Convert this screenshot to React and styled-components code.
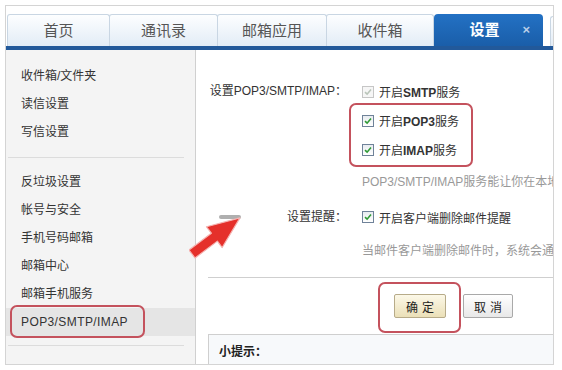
import React from 'react';
import styled, { createGlobalStyle } from 'styled-components';

const GlobalStyle = createGlobalStyle`
  html, body {
    margin: 0;
    padding: 0;
    background: #fff;
  }
  body {
    font-family: "Liberation Sans", "Noto Sans CJK SC", sans-serif;
    font-size: 12px;
    color: #333;
  }
`;

const tabs = [
  { label: '首页', width: 103 },
  { label: '通讯录', width: 109 },
  { label: '邮箱应用', width: 110 },
  { label: '收件箱', width: 108 },
];

const navTop = ['收件箱/文件夹', '读信设置', '写信设置'];
const navBottom = ['反垃圾设置', '帐号与安全', '手机号码邮箱', '邮箱中心', '邮箱手机服务'];

const Frame = styled.div`
  margin: 5px 0 0 5px;
  width: 549px;
  height: 360px;
  box-sizing: border-box;
  border: 1px solid #d4d4d4;
  overflow: hidden;
  display: flex;
  flex-direction: column;
`;

const TabBar = styled.div`
  display: flex;
  align-items: flex-end;
  height: 40px;
  padding-left: 1px;
  border-bottom: 4px solid #22599a;
  overflow: hidden;
`;

const Tab = styled.div`
  flex-shrink: 0;
  width: ${({ $w }) => $w}px;
  height: 32px;
  box-sizing: border-box;
  margin-left: -1px;
  border: 1px solid #c9d6e3;
  border-bottom: none;
  border-radius: 3px 3px 0 0;
  background: linear-gradient(#fdfeff, #e2ecf6);
  color: #555;
  font-size: 15px;
  line-height: 31px;
  text-align: center;
  &:first-child {
    margin-left: 0;
  }
`;

const ActiveTab = styled.div`
  position: relative;
  flex-shrink: 0;
  width: 109px;
  height: 32px;
  border-radius: 4px 4px 0 0;
  background: linear-gradient(#2371c4, #1a5ea9);
  color: #fff;
  font-size: 15px;
  font-weight: bold;
  line-height: 31px;
  text-align: center;
  padding-right: 8px;
  box-sizing: border-box;
`;

const Close = styled.span`
  position: absolute;
  right: 13px;
  top: 0;
  font-size: 13px;
  color: #b9cfe9;
`;

const PartialTab = styled.div`
  flex-shrink: 0;
  width: 20px;
  height: 29px;
  margin-left: 7px;
  border-top: 1px solid #c9d6e3;
  border-left: 1px solid #c9d6e3;
  border-radius: 3px 0 0 0;
  background: linear-gradient(#fdfeff, #e2ecf6);
`;

const Body = styled.div`
  position: relative;
  flex: 1;
  display: flex;
  min-height: 0;
`;

const Sidebar = styled.div`
  width: 189px;
  flex-shrink: 0;
  border-right: 1px solid #d0d0d0;
  background: #f4f4f4;
  padding-top: 12px;
`;

const NavItem = styled.div`
  position: relative;
  height: 28px;
  line-height: 28px;
  padding-left: 15px;
  font-size: 12px;
  color: #333;
  background: ${({ $active }) => ($active ? '#e5e5e5' : 'transparent')};
  letter-spacing: ${({ $latin }) => ($latin ? '0.4px' : '0')};
`;

const NavDivider = styled.div`
  height: 1px;
  background: #dcdcdc;
  margin: ${({ $m }) => $m};
  margin-left: 2px;
  margin-right: 11px;
`;

const Mark = styled.span`
  position: absolute;
  left: ${({ $l }) => $l}px;
  top: ${({ $t }) => $t}px;
  width: ${({ $w }) => $w}px;
  height: ${({ $h }) => $h}px;
  box-sizing: border-box;
  border: 2px solid #c4525d;
  border-radius: 7px;
  pointer-events: none;
`;

const Main = styled.div`
  position: relative;
  flex: 1;
  min-width: 0;
  overflow: hidden;
  background: #fff;
  padding: 27px 0 0 12px;
  white-space: nowrap;
`;

const FieldRow = styled.div`
  display: grid;
  grid-template-columns: 139px auto;
  column-gap: 15px;
  margin-top: ${({ $mt }) => $mt || 0}px;
`;

const Label = styled.div`
  text-align: right;
  line-height: ${({ $lh }) => $lh}px;
  color: #333;
`;

const Options = styled.div`
  display: flex;
  flex-direction: column;
`;

const Group = styled.div`
  position: relative;
`;

const Option = styled.div`
  display: flex;
  align-items: center;
  gap: 5px;
  height: ${({ $h }) => $h}px;
  color: #333;
  b {
    font-weight: bold;
  }
`;

const Box = styled.span`
  width: 12px;
  height: 12px;
  box-sizing: border-box;
  border: 1px solid ${({ $off }) => ($off ? '#c6c6c6' : '#6f8299')};
  background: ${({ $off }) => ($off ? '#f6f6f6' : 'linear-gradient(#e8ecf0, #fff)')};
  display: inline-flex;
  align-items: center;
  justify-content: center;
`;

const Hint = styled.div`
  color: #999;
  line-height: 18px;
  margin-top: ${({ $mt }) => $mt}px;
`;

const Divider = styled.div`
  height: 1px;
  background: #cfcfcf;
  margin-top: 17px;
`;

const ButtonRow = styled.div`
  display: flex;
  gap: 17px;
  margin-top: 16px;
  padding-left: 186px;
`;

const Button = styled.button`
  height: 24px;
  width: ${({ $w }) => $w}px;
  padding: 0;
  border-radius: 2px;
  font-family: "Liberation Sans", "Noto Sans CJK SC", sans-serif;
  font-size: 12px;
  color: #222;
  letter-spacing: 4px;
  text-indent: 4px;
  border: 1px solid ${({ $primary }) => ($primary ? '#b7ab89' : '#a9a9a9')};
  background: ${({ $primary }) =>
    $primary ? 'linear-gradient(#fcf8e8, #ebe0b8)' : 'linear-gradient(#fff, #e8e8e8)'};
`;

const Tips = styled.div`
  margin-top: 16px;
  height: 40px;
  border-top: 1px solid #cfcfcf;
  border-left: 1px solid #cfcfcf;
  background: #f7f9fb;
  padding: 8px 0 0 10px;
  line-height: 18px;
  font-weight: bold;
  color: #222;
`;

const Arrow = styled.svg`
  position: absolute;
  left: 183px;
  top: 160px;
  pointer-events: none;
`;

const Check = ({ off }) => (
  <Box $off={off}>
    <svg width="8" height="8" viewBox="0 0 8 8">
      <path
        d="M1 4.2 L3.1 6.2 L7 1.6"
        fill="none"
        stroke={off ? '#b9c4b9' : '#2f9a35'}
        strokeWidth="1.6"
      />
    </svg>
  </Box>
);

const App = () => (
  <>
    <GlobalStyle />
    <Frame>
      <TabBar>
        {tabs.map((t) => (
          <Tab key={t.label} $w={t.width}>
            {t.label}
          </Tab>
        ))}
        <ActiveTab>
          设置
          <Close>×</Close>
        </ActiveTab>
        <PartialTab />
      </TabBar>
      <Body>
        <Sidebar>
          {navTop.map((n) => (
            <NavItem key={n}>{n}</NavItem>
          ))}
          <NavDivider $m="11px 0 10px" />
          {navBottom.map((n) => (
            <NavItem key={n}>{n}</NavItem>
          ))}
          <NavItem $active $latin>
            POP3/SMTP/IMAP
            <Mark $l={4} $t={-3} $w={135} $h={33} />
          </NavItem>
          <NavDivider $m="9px 0 0" />
        </Sidebar>
        <Main>
          <FieldRow>
            <Label $lh={29}>设置POP3/SMTP/IMAP：</Label>
            <Options>
              <Option $h={29}>
                <Check off />
                <span>
                  开启<b>SMTP</b>服务
                </span>
              </Option>
              <Group>
                <Option $h={29}>
                  <Check />
                  <span>
                    开启<b>POP3</b>服务
                  </span>
                </Option>
                <Option $h={29}>
                  <Check />
                  <span>
                    开启<b>IMAP</b>服务
                  </span>
                </Option>
                <Mark $l={-13} $t={-3} $w={124} $h={64} />
              </Group>
              <Hint $mt={9}>POP3/SMTP/IMAP服务能让你在本地客户端上收发邮件</Hint>
            </Options>
          </FieldRow>
          <FieldRow $mt={17}>
            <Label $lh={18}>设置提醒：</Label>
            <Options>
              <Option $h={18}>
                <Check />
                <span>开启客户端删除邮件提醒</span>
              </Option>
              <Hint $mt={16}>当邮件客户端删除邮件时，系统会通知你</Hint>
            </Options>
          </FieldRow>
          <Divider />
          <ButtonRow>
            <Group>
              <Button $primary $w={52}>确定</Button>
              <Mark $l={-16} $t={-12} $w={83} $h={51} />
            </Group>
            <Button $w={50}>取消</Button>
          </ButtonRow>
          <Tips>小提示：</Tips>
        </Main>
        <Arrow width="62" height="50" viewBox="0 0 62 50">
          <rect x="30" y="5" width="22" height="4" rx="2" fill="#7a7a7a" opacity="0.6" />
          <g transform="translate(3 44) rotate(-37)">
            <path
              d="M0 -5 L28 -5 L28 -13 L60 0 L28 13 L28 5 L0 5 Z"
              fill="#e5302b"
              stroke="#f5b3b1"
              strokeWidth="1.2"
              strokeLinejoin="round"
            />
          </g>
        </Arrow>
      </Body>
    </Frame>
  </>
);

export default App;
